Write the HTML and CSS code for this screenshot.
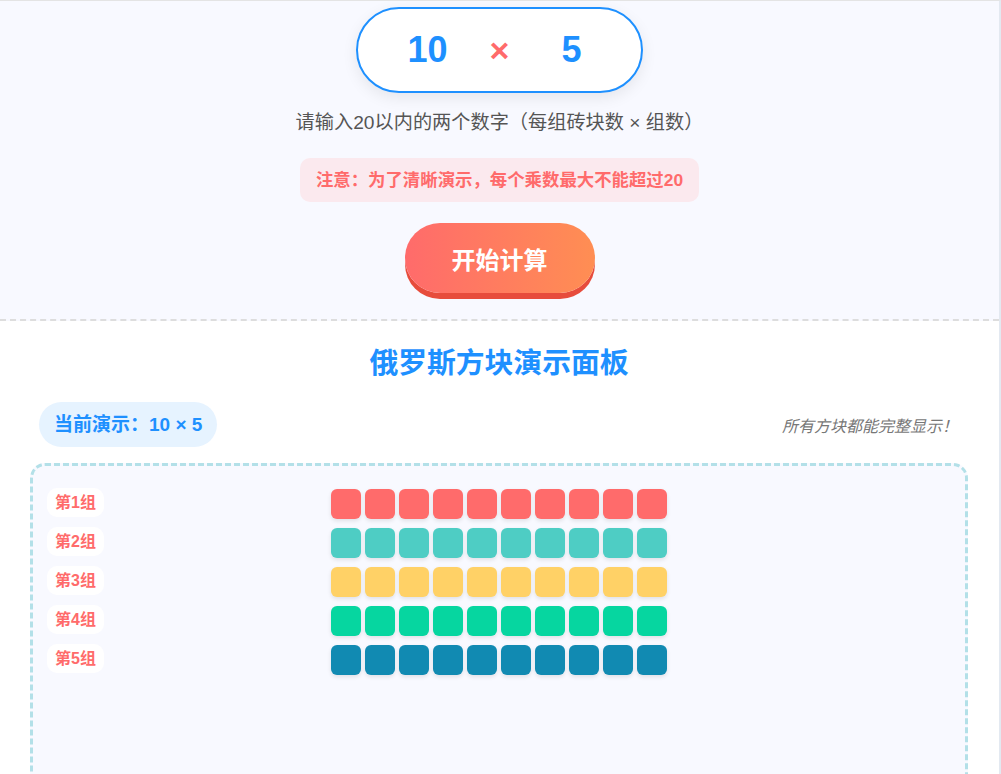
FILE: index.html
```html
<!DOCTYPE html>
<html lang="zh-CN">
<head>
    <meta charset="utf-8">
    <title>俄罗斯方块乘法演示</title>
    <link rel="stylesheet" href="styles.css">
</head>
<body>
    <div class="app">
        <section class="input-panel">
            <div class="number-pill">
                <input type="text" class="num-input" id="bricks" value="10">
                <span class="times">×</span>
                <input type="text" class="num-input" id="groups" value="5">
            </div>
            <p class="hint">请输入20以内的两个数字（每组砖块数 × 组数）</p>
            <div class="notice">注意：为了清晰演示，每个乘数最大不能超过20</div>
            <button type="button" id="start-btn">开始计算</button>
        </section>

        <section class="demo-panel">
            <h2 class="demo-title">俄罗斯方块演示面板</h2>
            <div class="info-row">
                <div class="current">当前演示：10 × 5</div>
                <div class="all-shown">所有方块都能完整显示！</div>
            </div>
            <div class="board">
                <div class="group-row">
                    <span class="group-label">第1组</span>
                    <div class="blocks c1">
                        <i></i><i></i><i></i><i></i><i></i><i></i><i></i><i></i><i></i><i></i>
                    </div>
                </div>
                <div class="group-row">
                    <span class="group-label">第2组</span>
                    <div class="blocks c2">
                        <i></i><i></i><i></i><i></i><i></i><i></i><i></i><i></i><i></i><i></i>
                    </div>
                </div>
                <div class="group-row">
                    <span class="group-label">第3组</span>
                    <div class="blocks c3">
                        <i></i><i></i><i></i><i></i><i></i><i></i><i></i><i></i><i></i><i></i>
                    </div>
                </div>
                <div class="group-row">
                    <span class="group-label">第4组</span>
                    <div class="blocks c4">
                        <i></i><i></i><i></i><i></i><i></i><i></i><i></i><i></i><i></i><i></i>
                    </div>
                </div>
                <div class="group-row">
                    <span class="group-label">第5组</span>
                    <div class="blocks c5">
                        <i></i><i></i><i></i><i></i><i></i><i></i><i></i><i></i><i></i><i></i>
                    </div>
                </div>
            </div>
        </section>
    </div>
</body>
</html>
```

FILE: styles.css
```css
body {
    margin: 0;
    font-family: "Liberation Sans", "Noto Sans CJK SC", sans-serif;
    background-color: #ffffff;
}

.app {
    border-top: 1px solid #e4e4e4;
    border-right: 2px solid #e3e9f1;
    min-height: 773px;
    overflow: hidden;
}

.input-panel {
    background-color: #f8f9ff;
    padding: 6px 20px 26px;
    border-bottom: 2px dashed #dddddd;
    display: flex;
    flex-direction: column;
    align-items: center;
}

.number-pill {
    display: flex;
    align-items: center;
    padding: 15px 30px;
    border: 2px solid #1e90ff;
    border-radius: 45px;
    background-color: #ffffff;
    box-shadow: 0 5px 15px rgba(0, 0, 0, 0.08);
}

.num-input {
    width: 80px;
    height: 52px;
    padding: 0;
    border: none;
    outline: none;
    background: transparent;
    text-align: center;
    font-family: "Liberation Sans", sans-serif;
    font-weight: bold;
    font-size: 36px;
    color: #1e90ff;
}

.times {
    margin: 0 22px;
    font-family: "Liberation Sans", sans-serif;
    font-weight: bold;
    font-size: 34px;
    color: #ff6b6b;
}

.hint {
    margin: 15px 0 0;
    font-size: 19.2px;
    line-height: 29px;
    color: #555555;
}

.notice {
    margin-top: 21px;
    padding: 10px 16px;
    border-radius: 10px;
    background-color: #fbe9ee;
    color: #ff6b6b;
    font-weight: bold;
    font-size: 17.4px;
    line-height: 24px;
}

#start-btn {
    margin-top: 21px;
    width: 190px;
    height: 70px;
    border: none;
    border-radius: 35px;
    background: linear-gradient(90deg, #ff6b6b, #ff8e53);
    box-shadow: 0 6px 0 #e74c3c;
    color: white;
    font-family: "Noto Sans CJK SC", sans-serif;
    font-weight: bold;
    font-size: 24px;
    cursor: pointer;
}

.demo-panel {
    padding: 25px 31px 0 30px;
}

.demo-title {
    margin: 0;
    text-align: center;
    font-size: 28.8px;
    line-height: 35px;
    color: #1e90ff;
}

.info-row {
    display: flex;
    justify-content: space-between;
    align-items: center;
    margin-top: 21px;
    padding: 0 10px 0 9px;
}

.current {
    padding: 9px 15px;
    border-radius: 23px;
    background-color: #e6f3ff;
    color: #1e90ff;
    font-weight: bold;
    font-size: 19px;
    line-height: 27px;
}

.all-shown {
    font-style: italic;
    font-size: 16px;
    color: #777777;
}

.board {
    margin-top: 16px;
    min-height: 420px;
    padding: 23px 14px 20px;
    border: 3px dashed #b3e0e8;
    border-radius: 15px;
    background-color: #f8f9ff;
    display: flex;
    flex-direction: column;
    gap: 9px;
}

.group-row {
    display: grid;
    grid-template-columns: 1fr auto 1fr;
    align-items: center;
}

.group-label {
    justify-self: start;
    padding: 4px 8px;
    border-radius: 10px;
    background-color: #ffffff;
    color: #ff6b6b;
    font-weight: bold;
    font-size: 16px;
    line-height: 21px;
    margin-top: -3px;
}

.blocks {
    display: flex;
    gap: 4px;
}

.blocks i {
    width: 30px;
    height: 30px;
    border-radius: 6px;
    box-shadow: 0 2px 4px rgba(0, 0, 0, 0.1);
}

.c1 i { background-color: #ff6b6b; }
.c2 i { background-color: #4ecdc4; }
.c3 i { background-color: #ffd166; }
.c4 i { background-color: #06d6a0; }
.c5 i { background-color: #118ab2; }
```
